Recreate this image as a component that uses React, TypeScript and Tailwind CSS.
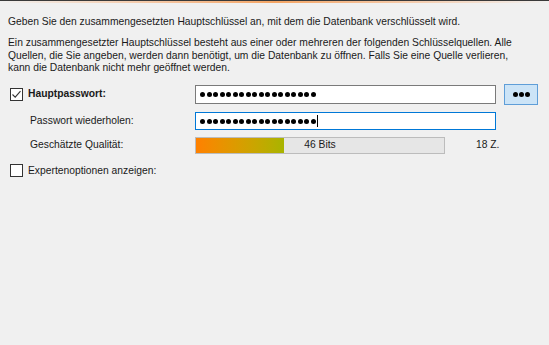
import { useState } from 'react';

const font = { fontFamily: '"Liberation Sans", Arial, sans-serif' };

function Dots({ count, size = 'w-[5px] h-[5px]', gap = 'gap-[1.5px]' }: { count: number; size?: string; gap?: string }) {
  return (
    <div className={`flex items-center ${gap}`}>
      {Array.from({ length: count }).map((_, i) => (
        <span key={i} className={`${size} rounded-full bg-black`} />
      ))}
    </div>
  );
}

function Checkbox({ checked }: { checked: boolean }) {
  return (
    <span className="w-[13px] h-[13px] border border-[#333] bg-white flex items-center justify-center shrink-0">
      {checked && (
        <svg width="11" height="11" viewBox="0 0 11 11" fill="none">
          <path d="M1.5 5.5L4.2 8.2L9.5 2.2" stroke="#333" strokeWidth="1.1" />
        </svg>
      )}
    </span>
  );
}

export default function App() {
  const [showPw] = useState(false);
  const quality = 46;

  return (
    <div className="w-[549px] h-[345px] bg-[#f0f0f0] text-[10.3px] text-[#1a1a1a] overflow-hidden" style={font}>
      {/* top accent */}
      <div className="h-px bg-[#3a3a3a]" />
      <div className="h-[2px] bg-gradient-to-r from-[#f0f0f0] via-[#f4a564] to-[#f0f0f0]" />

      <div className="px-2 pt-[12px]">
        <p className="leading-[13px]">
          Geben Sie den zusammengesetzten Hauptschlüssel an, mit dem die Datenbank verschlüsselt wird.
        </p>
        <p className="leading-[12.5px] mt-[9px]">
          Ein zusammengesetzter Hauptschlüssel besteht aus einer oder mehreren der folgenden Schlüsselquellen. Alle
          <br />
          Quellen, die Sie angeben, werden dann benötigt, um die Datenbank zu öffnen. Falls Sie eine Quelle verlieren,
          <br />
          kann die Datenbank nicht mehr geöffnet werden.
        </p>

        {/* Master password */}
        <div className="mt-[9px] flex items-center h-[21px]">
          <div className="w-[187px] flex items-center gap-[5px] pl-[2px]">
            <Checkbox checked />
            <span className="font-bold">Hauptpasswort:</span>
          </div>
          <div className="w-[301px] h-[19px] bg-white border border-[#7a7a7a] flex items-center pl-[4px]">
            <Dots count={showPw ? 0 : 18} />
          </div>
          <button className="ml-[8px] w-[34px] h-[21px] bg-[#cce4f7] border border-[#5f9ed8] flex items-center justify-center">
            <Dots count={3} size="w-[5px] h-[5px]" gap="gap-[1px]" />
          </button>
        </div>

        {/* Repeat */}
        <div className="mt-[7px] flex items-center h-[19px]">
          <div className="w-[187px] pl-[22px]">Passwort wiederholen:</div>
          <div className="w-[301px] h-[18px] bg-white border border-[#0078d7] flex items-center pl-[4px]">
            <Dots count={18} />
            <span className="ml-[1px] w-px h-[12px] bg-black" />
          </div>
        </div>

        {/* Quality */}
        <div className="mt-[6px] flex items-center h-[17px]">
          <div className="w-[187px] pl-[22px]">Geschätzte Qualität:</div>
          <div className="relative w-[250px] h-[17px] bg-[#e6e6e6] border border-[#bcbcbc]">
            <div
              className="h-full bg-gradient-to-r from-[#ff8000] to-[#a8b400]"
              style={{ width: `${(quality / 130) * 100}%` }}
            />
            <span className="absolute inset-0 flex items-center justify-center">{quality} Bits</span>
          </div>
          <span className="ml-[31px]">18 Z.</span>
        </div>

        {/* Expert */}
        <div className="mt-[9px] flex items-center gap-[5px] pl-[2px]">
          <Checkbox checked={false} />
          <span>Expertenoptionen anzeigen:</span>
        </div>
      </div>
    </div>
  );
}
